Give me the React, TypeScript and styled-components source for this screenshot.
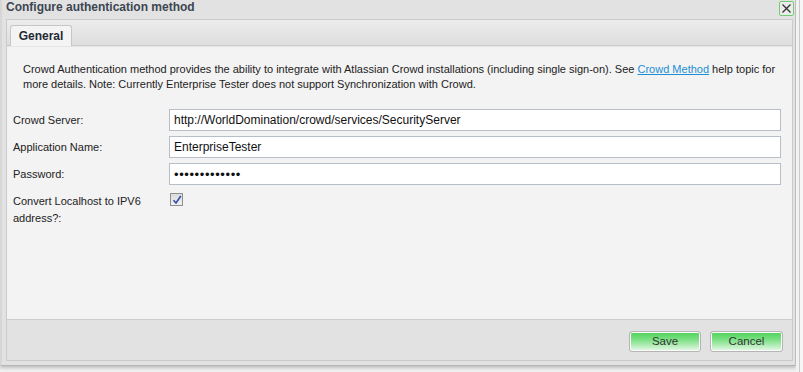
import styled, { createGlobalStyle } from 'styled-components';

const GlobalStyle = createGlobalStyle`
  html, body {
    margin: 0;
    padding: 0;
    background: #efefef;
  }
  body {
    font-family: "Liberation Sans", Arial, sans-serif;
    font-size: 11px;
    color: #222;
  }
`;

const SPage = styled.div`
  display: flex;
  width: 803px;
  height: 372px;
  overflow: hidden;
`;

const SDialog = styled.div`
  width: 796px;
  height: 366px;
  display: flex;
  flex-direction: column;
  background: #e2e2e2;
  border-left: 2px solid #d6d6d6;
  border-right: 1px solid #bdbdbd;
  border-bottom: 1px solid #b5b5b5;
  box-shadow: 0 2px 3px rgba(0, 0, 0, 0.2);
  padding: 0 1px 4px 4px;
  box-sizing: border-box;
`;

const SBackdrop = styled.div`
  flex: 1;
  background: linear-gradient(to right, #f2f2f2 0, #f2f2f2 3px, #c9c9c9 3px, #c9c9c9 4px, #f6f6f6 4px);
`;

const STitleBar = styled.div`
  height: 19px;
  display: flex;
  align-items: flex-start;
  justify-content: space-between;
`;

const STitle = styled.div`
  font-weight: bold;
  font-size: 12px;
  line-height: 14px;
  color: #3c4652;
`;

const SClose = styled.button`
  width: 15px;
  height: 15px;
  margin-top: 1px;
  padding: 0;
  border: 1px solid #6fcf6f;
  border-radius: 2px;
  background: #ececec;
  display: flex;
  align-items: center;
  justify-content: center;
`;

const SFrame = styled.div`
  flex: 1;
  display: flex;
  flex-direction: column;
  border: 1px solid #cbcbcb;
  margin-right: 1px;
`;

const STabStrip = styled.div`
  height: 25px;
  display: flex;
  align-items: flex-end;
  padding-left: 3px;
  background: linear-gradient(#ececec, #dedede);
  border-bottom: 1px solid #cacaca;
`;

const STab = styled.div`
  width: 62px;
  height: 21px;
  margin-bottom: -1px;
  box-sizing: border-box;
  border: 1px solid #c6c6c6;
  border-bottom: none;
  border-radius: 3px 3px 0 0;
  background: #f4f4f4;
  font-weight: bold;
  font-size: 12px;
  color: #1f2a36;
  display: flex;
  align-items: center;
  justify-content: center;
`;

const SPanel = styled.div`
  flex: 1;
  background: #f3f3f3;
  border-top: 1px solid #e6e6e6;
  border-bottom: 1px solid #cdcdcd;
  padding: 15px 11px 0 6px;
`;

const SIntro = styled.p`
  margin: 0 0 17px 10px;
  line-height: 15px;
  color: #222;
  a {
    color: #1a8fd6;
    text-decoration: underline;
  }
`;

const SForm = styled.div`
  display: grid;
  grid-template-columns: 156px 1fr;
  row-gap: 5px;
`;

const SLabel = styled.label`
  line-height: 22px;
  color: #222;
`;

const SWrapLabel = styled(SLabel)`
  line-height: 17px;
  padding-top: 3px;
`;

const SInput = styled.input<{ $secret?: boolean }>`
  height: 22px;
  box-sizing: border-box;
  border: 1px solid #b7bdc9;
  background: #fff;
  padding: 0 4px;
  font-family: "Liberation Sans", Arial, sans-serif;
  font-size: ${(p) => (p.$secret ? '13px' : '12px')};
  letter-spacing: ${(p) => (p.$secret ? '0.6px' : 'normal')};
  color: #111;
  outline: none;
`;

const SCheck = styled.span`
  width: 13px;
  height: 13px;
  margin-top: 3px;
  margin-left: 1px;
  box-sizing: border-box;
  border: 1px solid #8f8f8f;
  background: linear-gradient(#dcdcdc, #f0f0f0);
  display: flex;
  align-items: center;
  justify-content: center;
`;

const SFooter = styled.div`
  height: 40px;
  display: flex;
  justify-content: flex-end;
  align-items: center;
  gap: 9px;
  padding-right: 9px;
  padding-top: 2px;
  box-sizing: border-box;
`;

const SButton = styled.button<{ $w: number }>`
  width: ${(p) => p.$w}px;
  height: 21px;
  border: 1px solid #b5b5b5;
  border-radius: 3px;
  box-shadow: inset 0 0 0 1px #fafafa;
  background: linear-gradient(#4fd35a 0%, #7be083 40%, #e9f9ea 100%);
  font-family: "Liberation Sans", Arial, sans-serif;
  font-size: 11.5px;
  color: #333;
  padding: 0;
`;

export default function App() {
  return (
    <SPage>
      <GlobalStyle />
      <SDialog>
        <STitleBar>
          <STitle>Configure authentication method</STitle>
          <SClose aria-label="close">
            <svg width="11" height="11" viewBox="0 0 11 11">
              <path d="M1.5 1.5 L9.5 9.5 M9.5 1.5 L1.5 9.5" stroke="#333" strokeWidth="1.3" />
            </svg>
          </SClose>
        </STitleBar>
        <SFrame>
          <STabStrip>
            <STab>General</STab>
          </STabStrip>
          <SPanel>
            <SIntro>
              Crowd Authentication method provides the ability to integrate with Atlassian Crowd installations
              (including single sign-on). See <a href="#">Crowd Method</a> help topic for more details. Note:
              Currently Enterprise Tester does not support Synchronization with Crowd.
            </SIntro>
            <SForm>
              <SLabel>Crowd Server:</SLabel>
              <SInput defaultValue="http://WorldDomination/crowd/services/SecurityServer" />
              <SLabel>Application Name:</SLabel>
              <SInput defaultValue="EnterpriseTester" />
              <SLabel>Password:</SLabel>
              <SInput type="password" $secret defaultValue="abcdefghijklm" />
              <SWrapLabel>
                Convert Localhost to IPV6
                <br />
                address?:
              </SWrapLabel>
              <div>
                <SCheck>
                  <svg width="10" height="10" viewBox="0 0 10 10">
                    <path d="M1.5 5.2 L4 8 L8.8 1" fill="none" stroke="#2f4fa8" strokeWidth="1.6" />
                  </svg>
                </SCheck>
              </div>
            </SForm>
          </SPanel>
          <SFooter>
            <SButton $w={72}>Save</SButton>
            <SButton $w={73}>Cancel</SButton>
          </SFooter>
        </SFrame>
      </SDialog>
      <SBackdrop />
    </SPage>
  );
}
